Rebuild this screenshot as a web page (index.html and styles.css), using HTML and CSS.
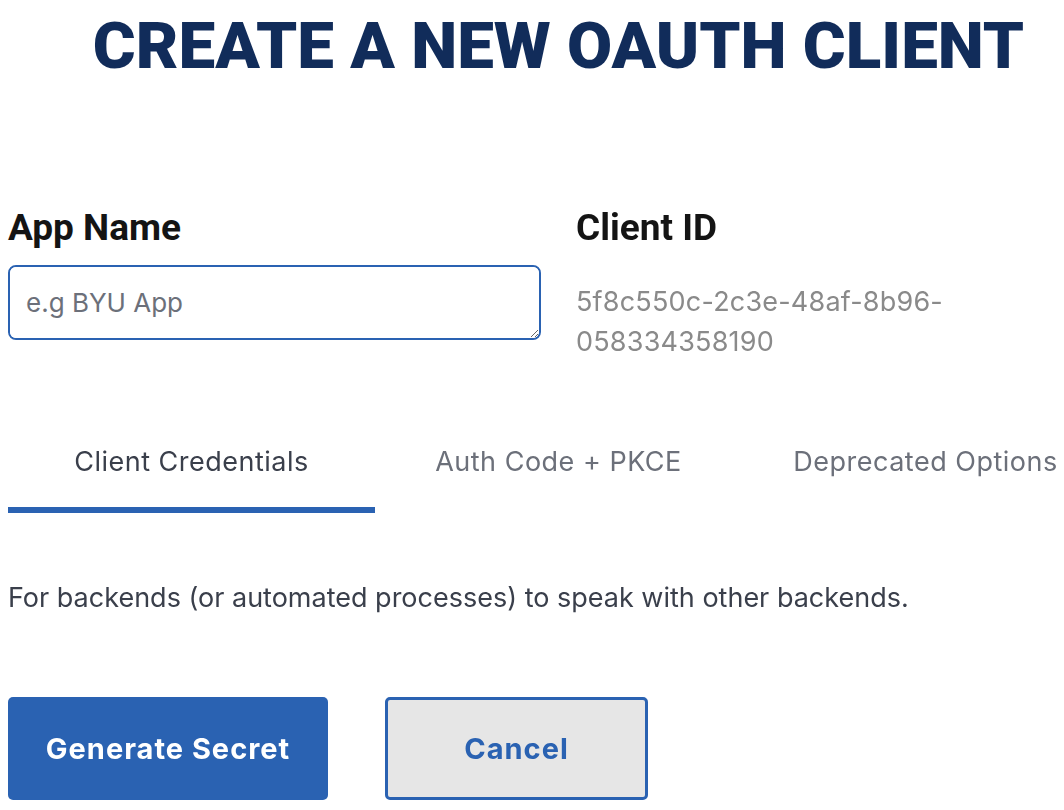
FILE: index.html
```html
<!DOCTYPE html>
<html lang="en">
<head>
<meta charset="utf-8">
<title>Create a new OAuth client</title>
<link rel="stylesheet" href="styles.css">
</head>
<body>
<main class="page">
  <h1 class="title">CREATE A NEW OAUTH CLIENT</h1>
  <div class="fields">
    <div class="field">
      <label class="field-label" for="app-name">App Name</label>
      <textarea id="app-name" class="app-input" placeholder="e.g BYU App"></textarea>
    </div>
    <div class="field">
      <div class="field-label">Client ID</div>
      <div class="client-id">5f8c550c-2c3e-48af-8b96-058334358190</div>
    </div>
  </div>
  <div class="tabs">
    <div class="tab active">Client Credentials</div>
    <div class="tab">Auth Code + PKCE</div>
    <div class="tab">Deprecated Options</div>
  </div>
  <p class="desc">For backends (or automated processes) to speak with other backends.</p>
  <div class="actions">
    <button class="btn btn-primary" type="button">Generate Secret</button>
    <button class="btn btn-secondary" type="button">Cancel</button>
  </div>
</main>
</body>
</html>
```
FILE: styles.css
```css
html, body {
  margin: 0;
  padding: 0;
  background: #ffffff;
  overflow: hidden;
}
.page {
  width: 1101px;
  padding-left: 8px;
  font-family: "Inter", "Roboto", sans-serif;
}
.title {
  margin: 6px 0 0 0;
  height: 80px;
  line-height: 80px;
  text-align: center;
  font-family: "Roboto", sans-serif;
  font-weight: 900;
  font-size: 65.5px;
  color: #112c5a;
}
.fields {
  display: grid;
  grid-template-columns: 533px 533px;
  column-gap: 35px;
  margin-top: 118px;
}
.field {
  display: flex;
  flex-direction: column;
}
.field-label {
  font-family: "Roboto", sans-serif;
  font-size: 37px;
  font-weight: 700;
  line-height: 48px;
  color: #141414;
  margin-bottom: 13px;
}
.app-input {
  box-sizing: border-box;
  width: 533px;
  height: 75px;
  border: 2px solid #2a62b2;
  border-radius: 8px;
  padding: 18px 16px;
  font-family: "Inter", sans-serif;
  font-size: 26px;
  line-height: 36px;
  color: #222;
  outline: none;
  resize: vertical;
}
.app-input::placeholder {
  color: #6c707a;
}
.client-id {
  padding-top: 17px;
  width: 400px;
  font-size: 27px;
  letter-spacing: 0.2px;
  line-height: 40px;
  color: #8a8a8a;
}
.tabs {
  display: flex;
  margin-top: 80px;
}
.tab {
  flex: 0 0 367px;
  text-align: center;
  font-size: 27px;
  letter-spacing: 0.5px;
  line-height: 40px;
  padding-bottom: 25px;
  border-bottom: 6px solid transparent;
  color: #6c707a;
}
.tab.active {
  color: #3a3f4b;
  border-bottom-color: #2a62b2;
}
.desc {
  margin: 67px 0 0 0;
  font-size: 27px;
  line-height: 36px;
  color: #3a3f4b;
}
.actions {
  display: flex;
  gap: 57px;
  margin-top: 81px;
}
.btn {
  box-sizing: border-box;
  height: 103px;
  border-radius: 5px;
  font-family: "Inter", sans-serif;
  font-size: 29px;
  letter-spacing: 1px;
  font-weight: 700;
  cursor: pointer;
}
.btn-primary {
  width: 320px;
  background: #2a62b2;
  color: #ffffff;
  border: none;
}
.btn-secondary {
  width: 263px;
  background: #e6e6e6;
  color: #2a62b2;
  border: 3px solid #2a62b2;
}
```
